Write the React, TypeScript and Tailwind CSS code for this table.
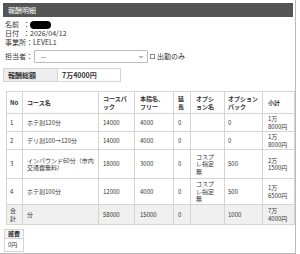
import { ChevronDown } from 'lucide-react';

interface Row {
  no: string;
  course: string;
  pack: string;
  shimei: string;
  ext: string;
  option: string;
  optPack: string;
  total: string;
  h: string;
}

const ROWS: Row[] = [
  { no: '1', course: 'ホテ割120分', pack: '14000', shimei: '4000', ext: '0', option: '', optPack: '0', total: '1万8000円', h: 'h-[18px]' },
  { no: '2', course: 'デリ割100→120分', pack: '14000', shimei: '4000', ext: '0', option: '', optPack: '0', total: '1万8000円', h: 'h-[18px]' },
  { no: '3', course: 'インバウンド60分（市内交通費無料）', pack: '18000', shimei: '3000', ext: '0', option: 'コスプレ指定無', optPack: '500', total: '2万1500円', h: 'h-[29px]' },
  { no: '4', course: 'ホテ割100分', pack: '12000', shimei: '4000', ext: '0', option: 'コスプレ指定無', optPack: '500', total: '1万6500円', h: 'h-[26px]' },
];

const font = { fontFamily: '"Noto Sans CJK JP", "Noto Sans", sans-serif' };

// column paddings, shared by header and body cells
const c = 'border border-[#d4d4d4] align-middle text-left';
const cols = [
  `${c} px-[3px]`,
  `${c} px-[4px]`,
  `${c} px-[4px]`,
  `${c} px-[5px]`,
  `${c} px-[4px]`,
  `${c} pl-[5px] pr-[6px]`,
  `${c} px-[3px]`,
  `${c} pl-[5px] pr-[6px]`,
];

export default function App() {
  return (
    <div className="w-[300px] h-[254px] overflow-hidden bg-white text-[#333] text-[7px] leading-[9px]" style={font}>
      <div className="w-[296px] h-[254px] pl-[3px] pt-[3px] pr-[2px] border-r border-b border-[#bbb]">
        {/* Title bar */}
        <div className="h-[14px] bg-[#555] text-white text-[7px] leading-[14px] pl-[5px]">報酬明細</div>

        {/* Info */}
        <div className="mt-[3px] pl-[2px] whitespace-nowrap">
          <div className="flex h-[9px] items-center">
            <span className="min-w-[18px]">名前</span>
            <span>：</span>
            <span className="inline-block w-[21px] h-[8px] rounded-full bg-black"></span>
          </div>
          <div className="flex h-[9px] items-center">
            <span className="min-w-[18px]">日付</span>
            <span>：</span>
            <span>2026/04/12</span>
          </div>
          <div className="flex h-[9px] items-center">
            <span className="min-w-[18px]">事業所</span>
            <span>：</span>
            <span>LEVEL1</span>
          </div>
          <div className="flex items-center mt-[3px] h-[13px]">
            <span>担当者</span>
            <span className="mr-[1px]">：</span>
            <div className="w-[114px] h-[13px] border border-[#bbb] rounded-[1px] flex items-center justify-between pl-[6px] pr-[3px]">
              <span>--</span>
              <ChevronDown size={6} strokeWidth={3} />
            </div>
            <span className="ml-[2px] w-[5px] h-[5px] border border-[#888]"></span>
            <span className="ml-[2px]">出勤のみ</span>
          </div>
        </div>

        {/* Total amount */}
        <table className="mt-[5px] border-collapse text-[7px]">
          <tbody>
            <tr>
              <td className="w-[54px] h-[13px] border border-[#d4d4d4] bg-[#eee] font-bold px-[4px]">報酬総額</td>
              <td className="w-[63px] h-[13px] border border-[#d4d4d4] font-bold px-[4px]">7万4000円</td>
            </tr>
          </tbody>
        </table>

        {/* Detail table */}
        <table className="mt-[9px] ml-[3px] w-[288px] table-fixed border-collapse text-[6px] leading-[7.5px]">
          <colgroup>
            <col className="w-[16px]" />
            <col className="w-[76px]" />
            <col className="w-[36px]" />
            <col className="w-[39px]" />
            <col className="w-[17px]" />
            <col className="w-[34px]" />
            <col className="w-[38px]" />
            <col className="w-[32px]" />
          </colgroup>
          <thead>
            <tr className="font-bold h-[22px]">
              <th className={cols[0]}>No</th>
              <th className={cols[1]}>コース名</th>
              <th className={cols[2]}>コースパック</th>
              <th className={cols[3]}>本指名、フリー</th>
              <th className={cols[4]}>延長</th>
              <th className={cols[5]}>オプション名</th>
              <th className={cols[6]}>オプションパック</th>
              <th className={cols[7]}>小計</th>
            </tr>
          </thead>
          <tbody>
            {ROWS.map(r => (
              <tr key={r.no} className={r.h}>
                <td className={cols[0]}>{r.no}</td>
                <td className={cols[1]}>{r.course}</td>
                <td className={cols[2]}>{r.pack}</td>
                <td className={cols[3]}>{r.shimei}</td>
                <td className={cols[4]}>{r.ext}</td>
                <td className={cols[5]}>{r.option}</td>
                <td className={cols[6]}>{r.optPack}</td>
                <td className={cols[7]}>{r.total}</td>
              </tr>
            ))}
            <tr className="bg-[#f0f0f0] h-[20px]">
              <td className={cols[0]}>合計</td>
              <td className={cols[1]}>分</td>
              <td className={cols[2]}>58000</td>
              <td className={cols[3]}>15000</td>
              <td className={cols[4]}>0</td>
              <td className={cols[5]}></td>
              <td className={cols[6]}>1000</td>
              <td className={cols[7]}>7万4000円</td>
            </tr>
          </tbody>
        </table>

        {/* Misc */}
        <table className="mt-[4px] ml-[1px] border-collapse text-[6px]">
          <tbody>
            <tr>
              <td className="border border-[#d4d4d4] bg-[#f5f5f5] font-bold px-[3px] h-[9px] leading-[8px]">雑費</td>
            </tr>
            <tr>
              <td className="border border-[#d4d4d4] px-[3px] h-[13px] leading-[8px]">0円</td>
            </tr>
          </tbody>
        </table>
      </div>
    </div>
  );
}
